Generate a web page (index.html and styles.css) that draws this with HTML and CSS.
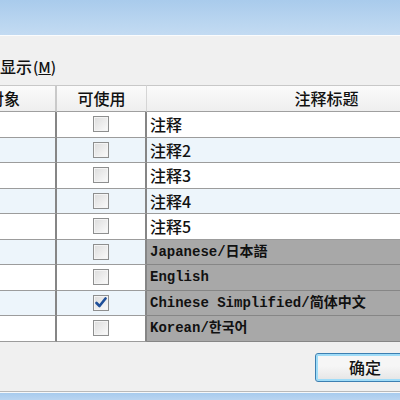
FILE: index.html
```html
<!doctype html>
<html lang="zh-CN">
  <head>
    <meta charset="UTF-8" />
    <title>注释</title>
    <link rel="stylesheet" href="styles.css">
  </head>
  <body>
    <div class="titlebar"></div>
    <div class="dialog">
      <div class="show-label">显示<span class="hotkey">(<u>M</u>)</span></div>
      <div class="grid">
        <div class="head col-obj"><span class="obj-title">对象</span></div>
        <div class="head col-use">可使用</div>
        <div class="head col-title">注释标题</div>

        <div class="cell"></div>
        <div class="cell check"><span class="box"></span></div>
        <div class="cell name">注释</div>

        <div class="cell alt"></div>
        <div class="cell check alt"><span class="box"></span></div>
        <div class="cell name alt">注释2</div>

        <div class="cell"></div>
        <div class="cell check"><span class="box"></span></div>
        <div class="cell name">注释3</div>

        <div class="cell alt"></div>
        <div class="cell check alt"><span class="box"></span></div>
        <div class="cell name alt">注释4</div>

        <div class="cell"></div>
        <div class="cell check"><span class="box"></span></div>
        <div class="cell name">注释5</div>

        <div class="cell alt"></div>
        <div class="cell check alt"><span class="box"></span></div>
        <div class="cell name locked">Japanese/日本語</div>

        <div class="cell"></div>
        <div class="cell check"><span class="box"></span></div>
        <div class="cell name locked">English</div>

        <div class="cell alt"></div>
        <div class="cell check alt">
          <span class="box">
            <svg width="12" height="11" viewBox="0 0 12 11">
              <path d="M1.5 6 L4.5 9 L10.5 1.5" fill="none" stroke="#1f4f99" stroke-width="2.6" stroke-linecap="round" stroke-linejoin="round" />
            </svg>
          </span>
        </div>
        <div class="cell name locked">Chinese Simplified/简体中文</div>

        <div class="cell"></div>
        <div class="cell check"><span class="box"></span></div>
        <div class="cell name locked">Korean/한국어</div>
      </div>
      <div class="footer">
        <button class="ok-button">确定</button>
      </div>
    </div>
    <div class="bottombar"></div>
  </body>
</html>
```

FILE: styles.css
```css
html,
body {
  margin: 0;
  width: 400px;
  height: 400px;
  overflow: hidden;
  background-color: #f0f0f0;
  font-family: "Noto Sans CJK SC", "Liberation Sans", sans-serif;
  font-weight: 500;
  color: #111;
}

.titlebar {
  height: 35px;
  background: linear-gradient(#a9cbec, #c3dbf2);
  border-bottom: 1px solid #fbfcfd;
}

.dialog {
  height: 356px;
  background-color: #f0f0f0;
  border-bottom: 1px solid #b9b9b9;
  box-sizing: border-box;
}

.show-label {
  padding-top: 20px;
  height: 29px;
  font-size: 16px;
  line-height: 20px;
}

.hotkey {
  font-size: 15px;
  margin-left: 1px;
}

.grid {
  display: grid;
  grid-template-columns: 107px 90px 360px;
  grid-template-rows: 27px repeat(9, 25.5px);
  margin-left: -50px;
  width: 557px;
  background-color: #fff;
}

.head {
  background: linear-gradient(#fbfbfb, #eeeeee);
  border-top: 1px solid #c8c8c8;
  border-bottom: 1px solid #9f9f9f;
  border-right: 1px solid #d5d5d5;
  font-size: 16px;
  line-height: 24px;
  box-sizing: border-box;
  overflow: hidden;
  white-space: nowrap;
}

.col-obj {
  padding-left: 38px;
  border-right: 2px solid #c9c9c9;
}

.col-use,
.col-title {
  text-align: center;
}

.cell {
  border-bottom: 1px solid #9c9c9c;
  border-right: 2px solid #868686;
  box-sizing: border-box;
  background-color: #fff;
  overflow: hidden;
  white-space: nowrap;
}

.cell.alt {
  background-color: #edf5fb;
}

.check {
  display: flex;
  align-items: center;
  justify-content: center;
}

.box {
  width: 14px;
  height: 14px;
  border: 1px solid #8e8f8f;
  background: linear-gradient(135deg, #dcdcdc, #fbfbfb);
  box-shadow: inset 0 0 0 1px #f4f4f4;
  display: flex;
  align-items: center;
  justify-content: center;
}

.name {
  padding-left: 3px;
  font-size: 16px;
  line-height: 24px;
}

.name.locked {
  background-color: #a8a8a8;
  border-bottom-color: #868686;
  font-family: "Liberation Mono", "Noto Sans CJK SC", "Noto Sans CJK KR", monospace;
  font-weight: bold;
  font-size: 14px;
}

.footer {
  display: flex;
  padding-top: 11px;
  padding-left: 315px;
}

.ok-button {
  width: 100px;
  height: 29px;
  flex-shrink: 0;
  border: 1px solid #3c7fb1;
  border-radius: 3px;
  box-shadow: inset 0 0 0 2px #9fdcf8;
  background: linear-gradient(#f6f6f6 45%, #e4e4e4);
  font-family: "Noto Sans CJK SC", sans-serif;
  font-weight: 500;
  font-size: 16px;
  color: #111;
  padding: 0;
}

.bottombar {
  height: 8px;
  border-top: 1px solid #f6f8fa;
  background: linear-gradient(#a7cbee, #bcd6f1);
}
```
